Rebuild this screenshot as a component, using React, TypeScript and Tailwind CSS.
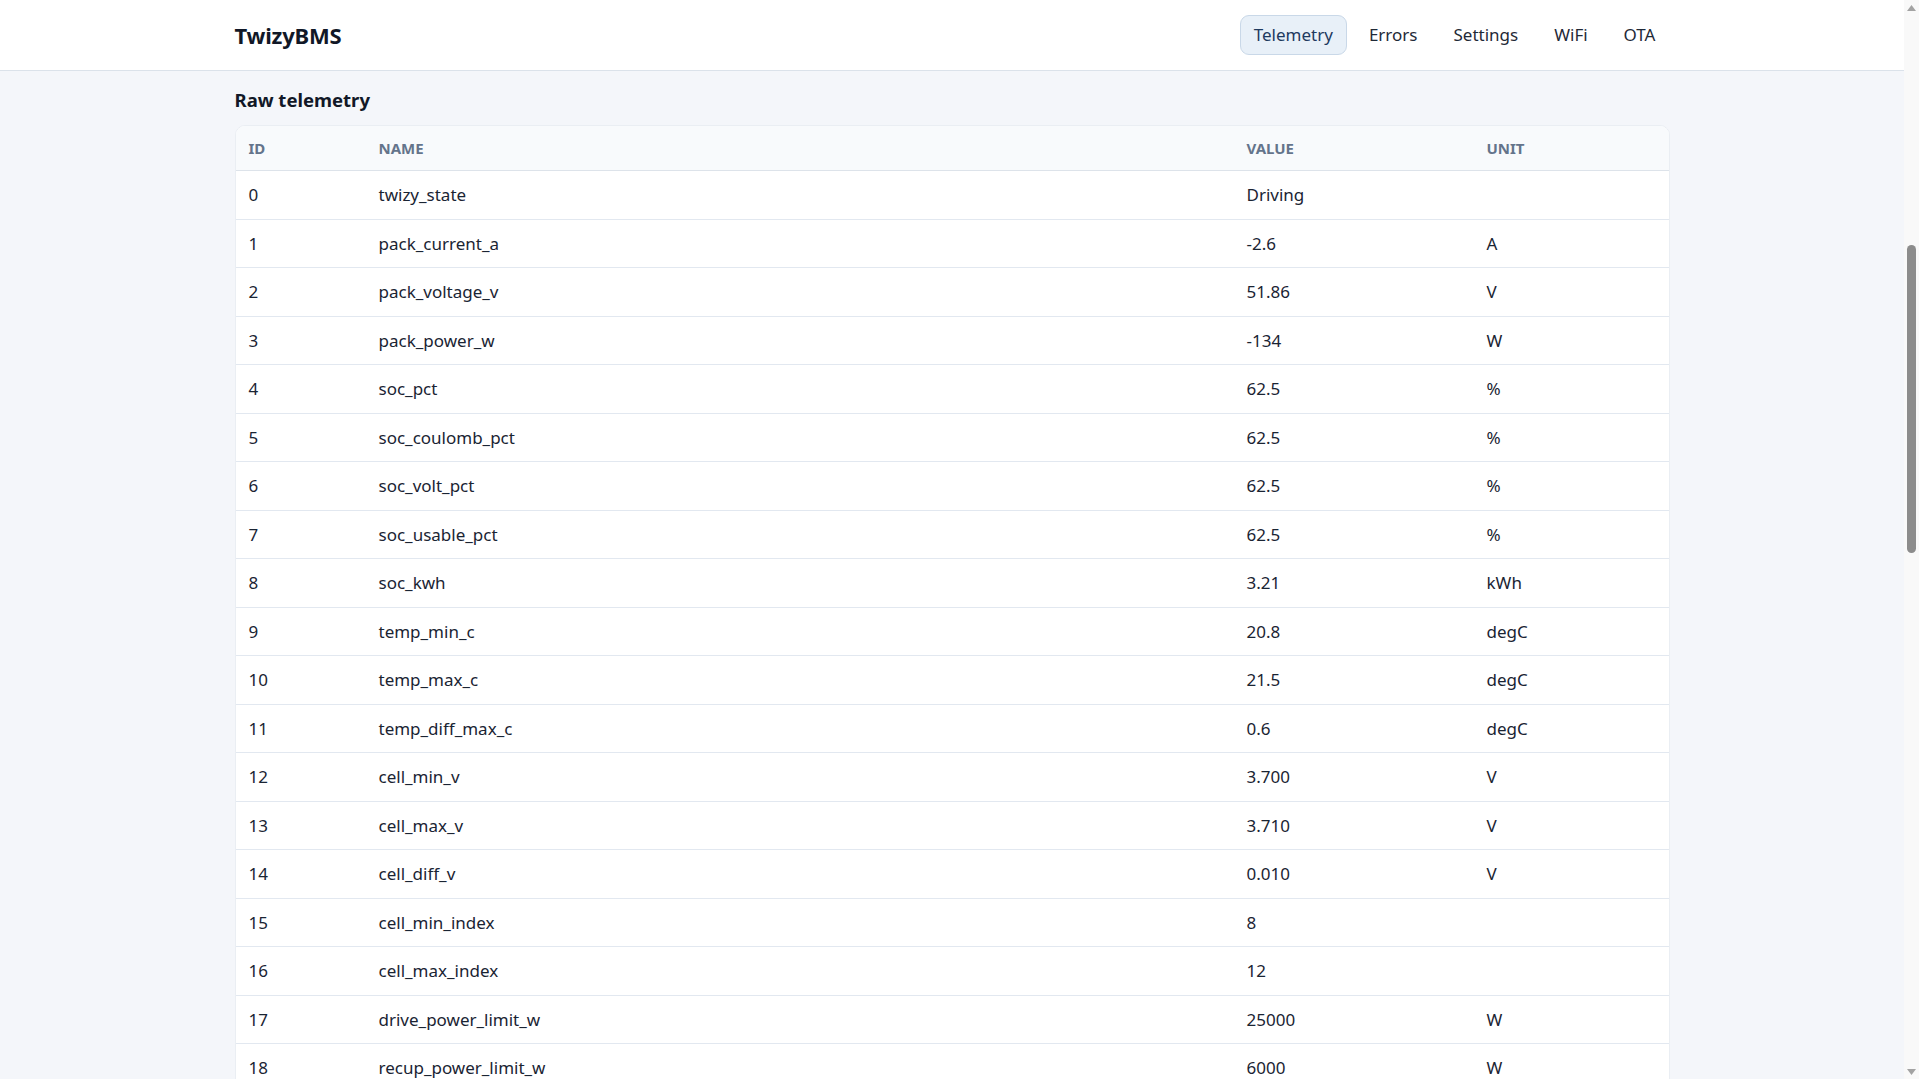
import React from 'react';

type Row = { id: number; name: string; value: string; unit: string };

const rows: Row[] = [
  { id: 0, name: 'twizy_state', value: 'Driving', unit: '' },
  { id: 1, name: 'pack_current_a', value: '-2.6', unit: 'A' },
  { id: 2, name: 'pack_voltage_v', value: '51.86', unit: 'V' },
  { id: 3, name: 'pack_power_w', value: '-134', unit: 'W' },
  { id: 4, name: 'soc_pct', value: '62.5', unit: '%' },
  { id: 5, name: 'soc_coulomb_pct', value: '62.5', unit: '%' },
  { id: 6, name: 'soc_volt_pct', value: '62.5', unit: '%' },
  { id: 7, name: 'soc_usable_pct', value: '62.5', unit: '%' },
  { id: 8, name: 'soc_kwh', value: '3.21', unit: 'kWh' },
  { id: 9, name: 'temp_min_c', value: '20.8', unit: 'degC' },
  { id: 10, name: 'temp_max_c', value: '21.5', unit: 'degC' },
  { id: 11, name: 'temp_diff_max_c', value: '0.6', unit: 'degC' },
  { id: 12, name: 'cell_min_v', value: '3.700', unit: 'V' },
  { id: 13, name: 'cell_max_v', value: '3.710', unit: 'V' },
  { id: 14, name: 'cell_diff_v', value: '0.010', unit: 'V' },
  { id: 15, name: 'cell_min_index', value: '8', unit: '' },
  { id: 16, name: 'cell_max_index', value: '12', unit: '' },
  { id: 17, name: 'drive_power_limit_w', value: '25000', unit: 'W' },
  { id: 18, name: 'recup_power_limit_w', value: '6000', unit: 'W' },
];

const navItems = ['Telemetry', 'Errors', 'Settings', 'WiFi', 'OTA'];

// page scrollbar as seen in the screenshot (page is scrolled partway)
const ScrollBar = () => (
  <div className="w-[15px] h-screen shrink-0 bg-[#f9f9f9] flex flex-col items-center">
    <div className="h-[15px] w-full flex items-center justify-center">
      <svg width="9" height="6" viewBox="0 0 9 6">
        <polygon points="4.5,0 9,6 0,6" fill="#a3a3a3" />
      </svg>
    </div>
    <div className="mt-[230px] h-[308px] w-[9px] rounded-full bg-[#8c8c8c]" />
    <div className="flex-1" />
    <div className="h-[15px] w-full flex items-center justify-center">
      <svg width="9" height="6" viewBox="0 0 9 6">
        <polygon points="0,0 9,0 4.5,6" fill="#a3a3a3" />
      </svg>
    </div>
  </div>
);

export default function App() {
  return (
    <div className="h-screen flex overflow-hidden bg-[#f4f6fa] font-['Noto_Sans','Open_Sans',sans-serif] text-[#1a2433]">
      <div className="flex-1 min-w-0 h-screen overflow-hidden">
        <header className="sticky top-0 z-10 bg-white border-b border-[#dbe2ea]">
          <div className="max-w-[1435px] mx-auto h-[70px] flex items-center justify-between">
            <h1 className="text-[22px] font-bold text-[#111827] tracking-[-0.01em]">TwizyBMS</h1>
            <nav className="flex items-center gap-[8px]">
              {navItems.map((item) => (
                <a
                  key={item}
                  href="#"
                  className={
                    item === 'Telemetry'
                      ? 'px-[13px] py-[7px] rounded-[9px] border border-[#c9d8e8] bg-[#e8f0f8] text-[17px] leading-[24px] text-[#1e3a5f]'
                      : 'px-[13px] py-[7px] rounded-[9px] border border-transparent text-[17px] leading-[24px] text-[#1f2937]'
                  }
                >
                  {item}
                </a>
              ))}
            </nav>
          </div>
        </header>

        <main className="max-w-[1435px] mx-auto pt-[16px] pb-10">
          <h2 className="text-[18.5px] leading-[26px] font-bold text-[#111827] mb-[12px]">Raw telemetry</h2>
          <div className="bg-white rounded-[10px] border border-[#eaeef3] overflow-hidden">
            <table className="w-full table-fixed border-collapse">
              <colgroup>
                <col className="w-[130px]" />
                <col />
                <col className="w-[240px]" />
                <col className="w-[195px]" />
              </colgroup>
              <thead>
                <tr className="bg-[#f8fafc] border-b border-[#dde3ea]">
                  {['ID', 'NAME', 'VALUE', 'UNIT'].map((h) => (
                    <th
                      key={h}
                      className="text-left px-[13px] py-[12px] text-[15px] leading-[20px] font-bold text-[#64748b]"
                    >
                      {h}
                    </th>
                  ))}
                </tr>
              </thead>
              <tbody>
                {rows.map((r) => (
                  <tr key={r.id} className="border-b border-[#e2e8f0]">
                    <td className="px-[13px] py-3 text-[17px] leading-[23.5px]">{r.id}</td>
                    <td className="px-[13px] py-3 text-[17px] leading-[23.5px]">{r.name}</td>
                    <td className="px-[13px] py-3 text-[17px] leading-[23.5px]">{r.value}</td>
                    <td className="px-[13px] py-3 text-[17px] leading-[23.5px]">{r.unit}</td>
                  </tr>
                ))}
              </tbody>
            </table>
          </div>
        </main>
      </div>
      <ScrollBar />
    </div>
  );
}
